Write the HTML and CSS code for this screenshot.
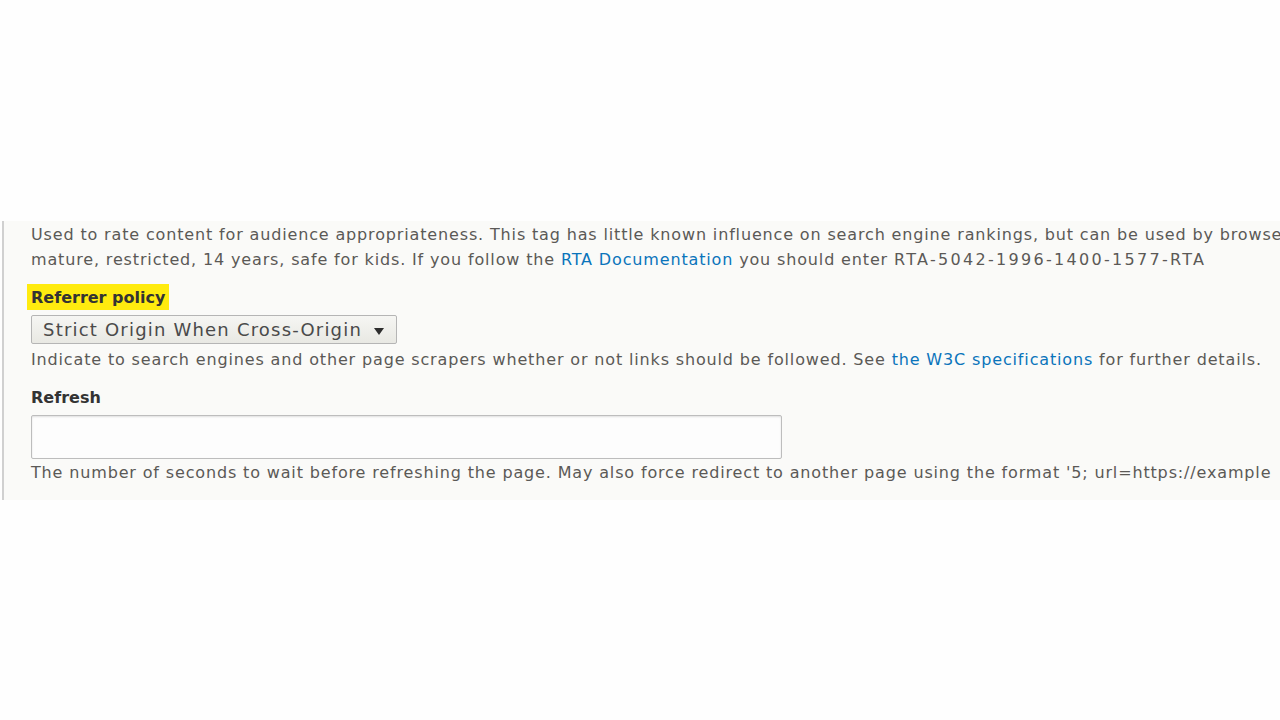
FILE: index.html
```html
<!DOCTYPE html>
<html lang="en">
<head>
  <meta charset="UTF-8">
  <meta name="viewport" content="width=device-width, initial-scale=1.0">
  <title>Metatag settings</title>
  <link rel="stylesheet" href="styles.css">
</head>
<body>
  <section class="panel">
    <p class="desc">
      Used to rate content for audience appropriateness. This tag has little known influence on search engine rankings, but can be used by browsers<br>
      mature, restricted, 14 years, safe for kids. If you follow the <a href="#">RTA Documentation</a> you should enter <span class="code">RTA-5042-1996-1400-1577-RTA</span>
    </p>

    <div class="field">
      <label class="label"><span class="mark">Referrer policy</span></label>
      <div class="select">
        <span>Strict Origin When Cross-Origin</span>
        <span class="arrow"></span>
      </div>
      <p class="desc">Indicate to search engines and other page scrapers whether or not links should be followed. See <a href="#">the W3C specifications</a> for further details.</p>
    </div>

    <div class="field">
      <label class="label">Refresh</label>
      <input class="input" type="text">
      <p class="desc">The number of seconds to wait before refreshing the page. May also force redirect to another page using the format '5; url=https://example</p>
    </div>
  </section>
</body>
</html>
```

FILE: styles.css
```css
/* Reset & Fonts */
* {
  margin: 0;
  padding: 0;
  box-sizing: border-box;
}

body {
  font-family: 'DejaVu Sans', Verdana, sans-serif;
  color: #5b5956;
  background-color: #fefefe;
  overflow: hidden;
}

/* Panel */
.panel {
  margin: 221px 0 0 2px;
  padding: 1px 0 15px 27px;
  border-left: 2px solid #d0d0d0;
  background-color: #fafaf8;
  overflow: hidden;
}

.desc {
  font-size: 16px;
  line-height: 25px;
  letter-spacing: 0.85px;
  white-space: nowrap;
}

.desc a {
  color: #0a74bb;
  text-decoration: none;
}

.desc .code {
  letter-spacing: 2.3px;
}

/* Fields */
.field {
  margin-top: 13px;
}

.label {
  display: block;
  font-size: 16px;
  font-weight: bold;
  line-height: 25px;
  color: #333;
  margin-bottom: 5px;
}

.mark {
  background-color: #ffeb0f;
  padding: 4px 4px 3px;
  margin-left: -4px;
}

.select {
  display: inline-flex;
  align-items: center;
  gap: 12px;
  height: 29px;
  padding: 0 12px 0 11px;
  border: 1px solid #b5b5b5;
  border-radius: 2px;
  background: linear-gradient(#f6f6f3, #e8e8e3);
  color: #4a4a4a;
  font-size: 18px;
  letter-spacing: 1.2px;
  margin-bottom: 2px;
}

.arrow {
  width: 0;
  height: 0;
  border-left: 5px solid transparent;
  border-right: 5px solid transparent;
  border-top: 7px solid #2e2e2e;
  margin-top: 3px;
}

.input {
  display: block;
  width: 751px;
  height: 44px;
  border: 1px solid #bdbdbd;
  border-radius: 2px;
  background-color: #fdfdfd;
  box-shadow: inset 0 1px 2px rgba(0, 0, 0, 0.12);
}

.field:last-child .label {
  margin-top: 1px;
}

.field .desc {
  margin-top: 1px;
}
```
